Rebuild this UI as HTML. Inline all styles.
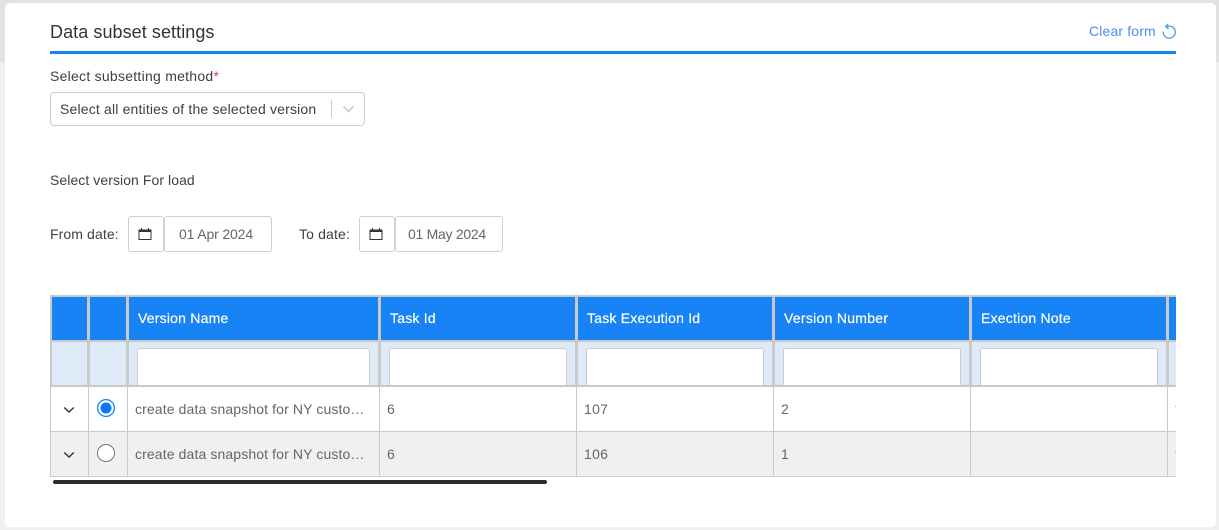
<!DOCTYPE html>
<html><head><meta charset="utf-8"><style>
html,body{margin:0;padding:0;width:1219px;height:530px;overflow:hidden;background:#f0f0f0}
body{position:relative;font-family:"Liberation Sans",Arial,sans-serif;font-size:14px;color:#3f3f3f}
.a{position:absolute;box-sizing:border-box;white-space:nowrap}
.t{line-height:18px}
.h{color:#fff;line-height:18px;top:309px;letter-spacing:.21px;-webkit-text-stroke:.2px #fff}
.c{color:#666;line-height:18px;letter-spacing:.12px}
.date{border:1px solid #cfcfcf;border-radius:3px;background:#fff;height:36px;top:216px;line-height:34px;color:#666}
.in{background:#fff;border:1px solid #ccc;border-bottom:0;border-radius:3px 3px 0 0;top:348px;height:37px}
.v{background:#c9c9c9}
</style></head><body>
<div class="a" style="left:0;top:0;width:1219px;height:62px;background:#e2e2e2"></div>
<div class="a" style="left:5px;top:3px;width:1211px;height:524px;background:#fff;border-radius:5px"></div>

<div class="a" style="left:50px;top:21px;font-size:18px;line-height:22px;color:#333;letter-spacing:.07px">Data subset settings</div>
<div class="a" style="left:50px;top:51px;width:1126px;height:3px;background:#1783f5"></div>
<div class="a t" style="left:1089px;top:22px;color:#4a8cf7;letter-spacing:.15px">Clear form</div>
<svg class="a" style="left:1162px;top:23px" width="15" height="17" viewBox="0 0 15 17" fill="none" stroke="#4a9bf5" stroke-width="1.3"><path d="M5 3.6A6 6 0 1 1 1.3 8.5"/><path d="M6.3 .8 3.6 3.5 6.6 5.8"/></svg>

<div class="a t" style="left:50px;top:67px;letter-spacing:.26px">Select subsetting method<span style="color:#e8305a">*</span></div>
<div class="a" style="left:50px;top:92px;width:315px;height:34px;border:1px solid #ccc;border-radius:4px;background:#fff"></div>
<div class="a t" style="left:60px;top:100px;letter-spacing:.17px">Select all entities of the selected version</div>
<div class="a" style="left:331px;top:100px;width:1px;height:18px;background:#ccc"></div>
<svg class="a" style="left:342px;top:105px" width="13" height="9" viewBox="0 0 13 9" fill="none" stroke="#ccc" stroke-width="1.6"><path d="M1.500 1.500 6.500 6.500 11.500 1.500"/></svg>

<div class="a t" style="left:50px;top:171px;letter-spacing:.07px">Select version For load</div>
<div class="a t" style="left:50px;top:225px;letter-spacing:.1px">From date:</div>
<div class="a date" style="left:128px;width:36px"></div>
<svg class="a" style="left:138px;top:227px" width="14" height="14" viewBox="0 0 14 14"><path d="M1 3h12v9.500H1z" fill="none" stroke="#333" stroke-width="1"/><path d="M1 2.500h12v2.500H1z" fill="#333"/><path d="M3.500 1v2M10.500 1v2" stroke="#333"/></svg>
<div class="a date" style="left:164px;width:108px;padding-left:14px;letter-spacing:-.14px">01 Apr 2024</div>
<div class="a t" style="left:299px;top:225px;letter-spacing:.15px">To date:</div>
<div class="a date" style="left:359px;width:36px"></div>
<svg class="a" style="left:369px;top:227px" width="14" height="14" viewBox="0 0 14 14"><path d="M1 3h12v9.500H1z" fill="none" stroke="#333" stroke-width="1"/><path d="M1 2.500h12v2.500H1z" fill="#333"/><path d="M3.500 1v2M10.500 1v2" stroke="#333"/></svg>
<div class="a date" style="left:395px;width:108px;padding-left:12px;letter-spacing:-.28px">01 May 2024</div>

<!-- table -->
<div class="a" style="left:50px;top:295px;width:1126px;height:182px;overflow:hidden;background:#fff">
  <div class="a" style="left:0;top:0;width:1126px;height:92px;background:#c9c9c9"></div>
  <div class="a" style="left:2px;top:2px;width:1124px;height:43px;background:#1783f5"></div>
  <div class="a" style="left:2px;top:47px;width:1124px;height:43px;background:#deeaf8"></div>
  <div class="a" style="left:0;top:137px;width:1126px;height:44px;background:#f0f0f0"></div>
  <div class="a v" style="left:0;top:90px;width:1px;height:92px"></div>
  <div class="a v" style="left:0;top:136px;width:1126px;height:1px"></div>
  <div class="a v" style="left:0;top:181px;width:1126px;height:1px"></div>
  <div class="a v" style="left:37px;top:0;width:3px;height:90px"></div>
  <div class="a v" style="left:76px;top:0;width:3px;height:90px"></div>
  <div class="a v" style="left:328px;top:0;width:3px;height:90px"></div>
  <div class="a v" style="left:525px;top:0;width:3px;height:90px"></div>
  <div class="a v" style="left:722px;top:0;width:3px;height:90px"></div>
  <div class="a v" style="left:919px;top:0;width:3px;height:90px"></div>
  <div class="a v" style="left:1116px;top:0;width:3px;height:90px"></div>
  <div class="a v" style="left:38px;top:90px;width:1px;height:92px"></div>
  <div class="a v" style="left:77px;top:90px;width:1px;height:92px"></div>
  <div class="a v" style="left:329px;top:90px;width:1px;height:92px"></div>
  <div class="a v" style="left:526px;top:90px;width:1px;height:92px"></div>
  <div class="a v" style="left:723px;top:90px;width:1px;height:92px"></div>
  <div class="a v" style="left:920px;top:90px;width:1px;height:92px"></div>
  <div class="a v" style="left:1117px;top:90px;width:1px;height:92px"></div>
</div>
<div class="a in" style="left:137px;width:233px"></div>
<div class="a in" style="left:389px;width:178px"></div>
<div class="a in" style="left:586px;width:178px"></div>
<div class="a in" style="left:783px;width:178px"></div>
<div class="a in" style="left:980px;width:178px"></div>

<div class="a h" style="left:138px">Version Name</div>
<div class="a h" style="left:390px">Task Id</div>
<div class="a h" style="left:587px">Task Execution Id</div>
<div class="a h" style="left:784px;letter-spacing:.28px">Version Number</div>
<div class="a h" style="left:981px">Exection Note</div>

<svg class="a" style="left:63px;top:406px" width="12" height="8" viewBox="0 0 12 8" fill="none" stroke="#333" stroke-width="1.4"><path d="M1.200 1.500 6 6 10.800 1.500"/></svg>
<svg class="a" style="left:63px;top:451px" width="12" height="8" viewBox="0 0 12 8" fill="none" stroke="#333" stroke-width="1.4"><path d="M1.200 1.500 6 6 10.800 1.500"/></svg>
<svg class="a" style="left:96px;top:398px" width="20" height="20" viewBox="0 0 20 20"><circle cx="10" cy="10" r="8.400" fill="#fff" stroke="#1783f5" stroke-width="1.300"/><circle cx="10" cy="10" r="5.500" fill="#0d76f2"/></svg>
<svg class="a" style="left:96px;top:443px" width="20" height="20" viewBox="0 0 20 20"><circle cx="10" cy="10" r="8.500" fill="#fff" stroke="#777" stroke-width="1"/></svg>

<div class="a c" style="left:135px;top:400px;width:240px;overflow:hidden">create data snapshot for NY custo…</div>
<div class="a c" style="left:135px;top:445px;width:240px;overflow:hidden">create data snapshot for NY custo…</div>
<div class="a c" style="left:387px;top:400px">6</div>
<div class="a c" style="left:387px;top:445px">6</div>
<div class="a c" style="left:584px;top:400px;letter-spacing:.3px">107</div>
<div class="a c" style="left:584px;top:445px;letter-spacing:.3px">106</div>
<div class="a c" style="left:781px;top:400px">2</div>
<div class="a c" style="left:781px;top:445px">1</div>
<div class="a" style="left:1175px;top:406px;width:1px;height:1px;background:#c9a58c"></div>
<div class="a" style="left:1175px;top:451px;width:1px;height:1px;background:#c9a58c"></div>

<div class="a" style="left:53px;top:480px;width:494px;height:4px;background:#2b2b2b;border-radius:2px"></div>
</body></html>
